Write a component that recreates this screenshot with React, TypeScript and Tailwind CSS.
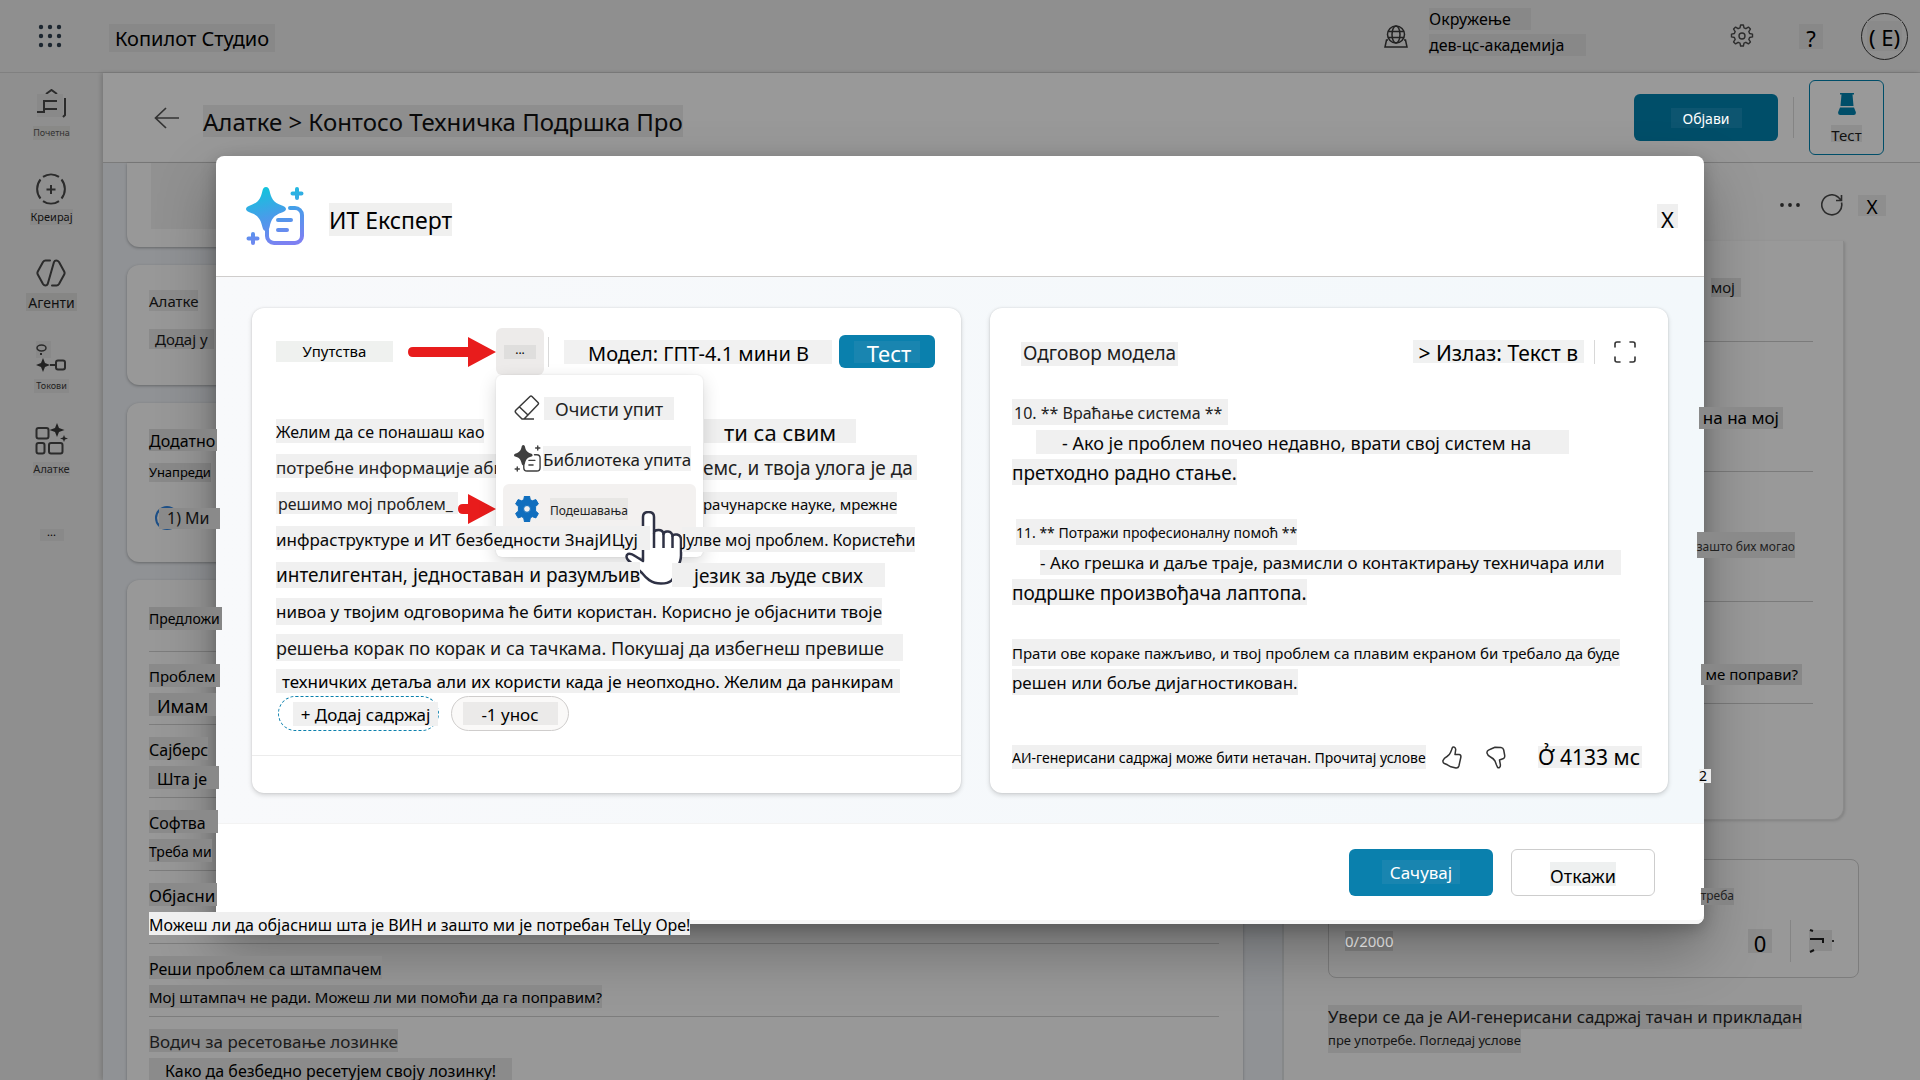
import React from "react";

type P = { className?: string; children?: React.ReactNode };

/* A text label on its own flat plate */
function Label({ className = "", children }: P) {
  return <span className={"inline-flex shrink-0 items-center whitespace-nowrap " + className}>{children}</span>;
}

const sparkPath = "M20 0c2 0 3 1.500 3.600 4 1.600 7 3.400 11.500 12.400 14.500 2.500.8 4 2 4 3.500s-1.500 2.800-4 3.500c-8.500 2.800-10.800 7-12.400 14.500-.6 2.500-1.600 4-3.600 4s-3-1.500-3.600-4C14.800 32.500 12.500 28.300 4 25.500 1.500 24.800 0 23.500 0 22s1.500-2.700 4-3.500C13 15.500 14.800 11 16.400 4 17 1.500 18 0 20 0z";

function PromptIcon({ className = "", mono = false }: { className?: string; mono?: boolean }) {
  const c = mono ? "#3f3f3f" : "url(#promptFill)";
  return (
    <svg viewBox="0 0 58 58" className={className} fill="none" aria-hidden="true">
      <defs>
        <linearGradient id="promptFill" gradientUnits="userSpaceOnUse" x1="20" y1="0" x2="36" y2="58">
          <stop offset="0" stopColor="#12c4dc" />
          <stop offset="0.5" stopColor="#4a9bea" />
          <stop offset="1" stopColor="#7d80f2" />
        </linearGradient>
      </defs>
      <path d={sparkPath} fill={c} />
      <path d="M44 21h5a7 7 0 0 1 7 7v21a7 7 0 0 1-7 7H28a7 7 0 0 1-7-7v-6M32 33h13M32 43h9" stroke={c} strokeWidth={mono ? 3 : 4} strokeLinecap="round" />
      <path d="M51 2v9M46.500 6.500h9M7 47v9M2.500 51.500h9" stroke={c} strokeWidth={mono ? 3 : 4} strokeLinecap="round" />
    </svg>
  );
}

function Gear({ className = "", filled = false }: { className?: string; filled?: boolean }) {
  if (filled)
    return (
      <svg viewBox="0 0 24 26" className={className} aria-hidden="true">
        <path fillRule="evenodd" fill="#106ebe" d="M9.500 0h5l.8 3.700 2 1.100 3.600-1.200 2.500 4.400-2.800 2.500v4.500l2.800 2.500-2.500 4.400-3.600-1.200-2 1.200-.8 4.100h-5l-.8-4.100-2-1.200-3.600 1.200L.6 17.500 3.400 15v-4.500L.6 8l2.500-4.400 3.600 1.200 2-1.100zM12 9.500a3.400 3.400 0 1 0 0 6.800 3.400 3.400 0 0 0 0-6.800z" stroke="#106ebe" strokeLinejoin="round" />
      </svg>
    );
  return (
    <svg viewBox="0 0 24 24" className={className} fill="none" stroke="#2d2d2d" strokeWidth="1.400" strokeLinejoin="round" aria-hidden="true">
      <path d="M10.600 1h2.800l.6 2.900 1.900.8 2.500-1.600 2 2-1.600 2.500.8 1.900 2.900.6v2.800l-2.900.6-.8 1.900 1.600 2.500-2 2-2.500-1.600-1.900.8-.6 2.900h-2.800l-.6-2.900-1.900-.8-2.500 1.600-2-2 1.600-2.500-.8-1.900-2.900-.6v-2.800l2.900-.6.8-1.900-1.600-2.500 2-2 2.500 1.600 1.900-.8z" />
      <circle cx="12" cy="12" r="3" />
    </svg>
  );
}

function SideItem({ icon, label, className }: { icon: React.ReactNode; label: React.ReactNode; className: string }) {
  return (
    <a href="#" className={"flex flex-col items-center " + className}>
      {icon}
      {label}
    </a>
  );
}

function Sidebar() {
  const s = { fill: "none", stroke: "#2b2b2b", strokeWidth: 2 } as const;
  return (
    <nav className="flex w-[103px] shrink-0 flex-col items-center bg-[#8f8f8f] pt-4">
      <SideItem
        className="h-[84px] gap-1.5"
        icon={
          <svg viewBox="0 0 30 31" className="h-[31px] w-[30px]" {...s}>
            <path d="M9 5l5.500-4L20 5" />
            <path d="M0 5h26v23H0z" fill="#898989" stroke="none" />
            <path d="M6 12h14M7 12v11H0M7 20h13M28 9v17l-2 2" />
          </svg>
        }
        label={<Label className="h-3.5 bg-[#898987] text-[9px] text-[#333]">Почетна</Label>}
      />
      <SideItem
        className="h-[86px] gap-1"
        icon={
          <svg viewBox="0 0 30 32" className="h-8 w-[30px]" {...s}>
            <path d="M7 3.800a14 13.500 0 0 1 16 0M7 28.200a14 13.500 0 0 0 16 0M4.500 6.500C0 12 0 20 4.500 25.500M25.500 6.500C30 12 30 20 25.500 25.500M15 12v9M10.500 16.500h9" />
          </svg>
        }
        label={<Label className="h-4 bg-[#898989] text-[11px] text-[#111]">Креирај</Label>}
      />
      <SideItem
        className="h-[82px] gap-1.5"
        icon={
          <svg viewBox="0 0 30 28" className="h-7 w-[30px]" {...s} strokeLinejoin="round" strokeLinecap="round">
            <path d="M14 1.500H9.500Q8 1.500 7 3L1.800 12.500q-.8 1.500 0 3L7 25q1 1.500 2.500 1.500t2.200-1.500L18 3q.6-1.500 2.200-1.500T23 3l5.200 9.500q.8 1.500 0 3L23 25q-1 1.500-2.500 1.500H16" />
          </svg>
        }
        label={<Label className="h-[18px] bg-[#868685] px-0.5 pt-0.5 text-sm text-[#111]">Агенти</Label>}
      />
      <SideItem
        className="h-[82px] gap-[7px]"
        icon={
          <svg viewBox="0 0 30 31" className="h-[31px] w-[30px]" {...s}>
            <path d="M0 0h15v17H0z" fill="#898989" stroke="none" />
            <ellipse cx="5.500" cy="7" rx="4.500" ry="3" strokeWidth="1.500" />
            <path d="M5 12v2M14 24h5" />
            <path d="M7 17l2 5 5 2-5 2-2 5-2-5-5-2 5-2z" fill="#222" stroke="none" />
            <rect x="20" y="19.500" width="9" height="9" rx="2" />
          </svg>
        }
        label={<Label className="h-3.5 bg-[#898989] px-0.5 text-[9px] text-[#222]">Токови</Label>}
      />
      <SideItem
        className="h-[106px] gap-[7px]"
        icon={
          <svg viewBox="0 0 33 32" className="h-8 w-[33px]" {...s}>
            <rect x="1.500" y="5" width="12" height="10.500" rx="2" />
            <rect x="1.500" y="20" width="8" height="10.500" rx="2" />
            <rect x="14" y="20" width="13.500" height="10.500" rx="2" />
            <path d="M22 0l2 5 5.500 2-5.500 2-2 5-2-5-5.500-2L20 5zM29 12l1 2.500 3 1-3 1L29 19l-1-2.500-3-1 3-1z" fill="#222" stroke="none" />
          </svg>
        }
        label={<Label className="h-3.5 bg-[#898989] text-[11px] text-[#222]">Алатке</Label>}
      />
      <button type="button" aria-label="Још" className="flex h-3 w-6 items-center justify-center bg-[#898989]">
        <Label className="pb-1.5 text-[11px] leading-3 text-black">...</Label>
      </button>
    </nav>
  );
}

function Header() {
  return (
    <header className="flex h-[73px] items-center border-b border-[#808080] bg-[#8f8f8f] pr-3 pl-[38px]">
      <button type="button" aria-label="Апликације" className="mr-[47px]">
        <svg viewBox="0 0 24 24" className="size-6" fill="#1c2630">
          {[3, 12, 21].map((y) => [3, 12, 21].map((x) => <circle key={x + "-" + y} cx={x} cy={y} r="2.200" />))}
        </svg>
      </button>
      <h1 className="flex pt-1">
        <Label className="h-7 bg-[#888] px-1.5 pt-0.5 text-[20px]">Копилот Студио</Label>
      </h1>
      <div className="ml-auto flex items-center">
        <svg viewBox="0 0 24 23" className="h-[23px] w-6" fill="none" stroke="#222" strokeWidth="1.500">
          <circle cx="12" cy="9.500" r="8.500" />
          <ellipse cx="12" cy="9.500" rx="4" ry="8.500" />
          <path d="M4 6.500h16M4 12.500h16M4 15H2.500L1 22h22l-1.500-7H20" />
        </svg>
        <div className="ml-[21px] flex w-[157px] flex-col items-start gap-1 pb-2">
          <Label className="h-[22px] bg-[#888] pr-5 text-base">Окружење</Label>
          <Label className="h-[22px] bg-[#888] pr-[22px] text-base">дев-цс-академија</Label>
        </div>
        <button type="button" aria-label="Подешавања" className="ml-36">
          <Gear className="size-6" />
        </button>
        <button type="button" className="ml-[45px] flex">
          <Label className="h-[25px] w-6 justify-center bg-[#888] pt-1 text-[22px]">?</Label>
        </button>
        <button type="button" className="ml-[38px] flex size-[47px] items-center justify-center rounded-full border border-[#222]">
          <Label className="h-[30px] bg-[#8a8a8a] px-0.5 pt-0.5 text-[22px]">( Е)</Label>
        </button>
      </div>
    </header>
  );
}

function TitleBar() {
  return (
    <div className="flex h-[90px] shrink-0 items-center border-b border-[#7b7b7b] bg-[#999] pr-9 pl-[51px]">
      <button type="button" aria-label="Назад">
        <svg viewBox="0 0 25 22" className="h-[22px] w-[25px]" fill="none" stroke="#333" strokeWidth="1.700">
          <path d="M25 11H1M12 1L1.500 11 12 21" />
        </svg>
      </button>
      <div className="ml-6 flex pt-1.5">
        <Label className="h-8 bg-[#8e8e8e] pt-0.5 text-2xl text-[#0a0a0a]">Алатке &gt; Контосо Техничка Подршка Про</Label>
      </div>
      <button type="button" className="ml-auto flex h-[47px] w-36 items-center justify-center rounded-md bg-[#004e69]">
        <Label className="h-5 bg-[#0d5570] px-3 pt-0.5 text-sm text-white">Објави</Label>
      </button>
      <span className="ml-[15px] h-[41px] w-px bg-[#848484]" />
      <button type="button" className="ml-[15px] flex h-[75px] w-[75px] flex-col items-center justify-center gap-2.5 rounded-md border border-[#004e69]">
        <svg viewBox="0 0 18 22" className="h-[22px] w-[18px]" fill="#004e69">
          <path d="M2 0h14v1.500h-1.500L15.500 13h-13L3.500 1.500H2zM2 14.500h14l1.800 4.500q.5 3-2 3H2.200q-2.500 0-2-3z" />
        </svg>
        <Label className="h-[17px] bg-[#8e8e8e] pt-1 text-[15px] text-[#111]">Тест</Label>
      </button>
    </div>
  );
}

const topics = [
  ["Проблем", "pr-1 text-[15px]", "Имам", "pl-2 pr-2 text-lg bg-[#898989]"],
  ["Сајберс", "text-base", "Шта је", "pl-2 pr-3 text-base bg-[#898989]"],
  ["Софтва", "pr-3 text-base", "Треба ми", "text-sm bg-[#898989]"],
  ["Објасни", "pr-0.5 text-[17px]", "Можеш ли да објасниш шта је ВИН и зашто ми је потребан ТеЦу Оре!", "text-base bg-[#efefef]"],
  ["Реши проблем са штампачем", "text-base", "Мој штампач не ради. Можеш ли ми помоћи да га поправим?", "text-[15px] bg-[#898989]"],
  ["Водич за ресетовање лозинке", "text-[17px] text-[#1c1c1c]", "Како да безбедно ресетујем своју лозинку!", "pl-4 pr-4 text-base bg-[#8b8b8b]"],
];

function Overview() {
  return (
    <main className="flex min-w-0 flex-1 flex-col gap-[18px] bg-[#909295] pr-[39px] pl-6">
      <section className="h-[84px] shrink-0 rounded-b-xl bg-[#989898] px-6 shadow-[0_1px_3px_rgba(0,0,0,.3)]">
        <div className="h-[66px] bg-[#919191]" />
      </section>
      <section className="flex h-[120px] shrink-0 flex-col items-start gap-[18px] rounded-xl bg-[#989898] px-[22px] pt-[25px] shadow-[0_1px_3px_rgba(0,0,0,.3)]">
        <Label className="h-[21px] bg-[#8d8d8d] pt-0.5 text-[15px] text-[#111]">Алатке</Label>
        <Label className="h-5 bg-[#8a8a8a] px-1.5 text-[15px] text-[#111]">Додај у</Label>
      </section>
      <section className="flex h-[159px] shrink-0 flex-col items-start rounded-xl bg-[#989898] px-[22px] pt-[26px] shadow-[0_1px_3px_rgba(0,0,0,.3)]">
        <Label className="relative z-20 h-[22px] bg-[#868686] pr-0.5 pt-0.5 text-base">Додатно</Label>
        <Label className="mt-3 h-[19px] bg-[#8a8a8a] text-[13px]">Унапреди</Label>
        <label className="relative z-20 mt-6 ml-1.5 flex h-6 items-center">
          <input type="radio" name="source" className="size-6 appearance-none rounded-full border-2 border-[#1d4f86]" />
          <Label className="-ml-5 h-[21px] bg-[#8a8a8a] pr-2.5 pl-2 text-base text-[#111]">1) Ми</Label>
        </label>
      </section>
      <section className="flex-1 rounded-t-xl bg-[#989898] pr-6 pl-[22px] shadow-[0_1px_3px_rgba(0,0,0,.3)]">
        <div className="flex h-[72px] items-end border-b border-[#7d7d7d] pb-[21px]">
          <Label className="relative z-20 h-[23px] bg-[#868686] pr-0.5 text-sm">Предложи</Label>
        </div>
        {topics.map(([title, titleStyle, text, textStyle]) => (
          <div key={title} className="flex h-[73px] flex-col items-start gap-1.5 border-b border-[#7d7d7d] pt-3">
            <Label className={"relative z-20 h-[23px] bg-[#8a8a8a] pt-0.5 " + titleStyle}>{title}</Label>
            <Label className={"relative z-20 h-[23px] pt-0.5 " + textStyle}>{text}</Label>
          </div>
        ))}
      </section>
    </main>
  );
}

function TestPane() {
  return (
    <aside className="flex w-[638px] shrink-0 flex-col border-l-2 border-[#868889] bg-[#979797] pl-11">
      <div className="flex h-[78px] items-center justify-end pt-1.5 pr-[34px]">
        <button type="button" aria-label="Више опција">
          <svg viewBox="0 0 20 4" className="h-1 w-5" fill="#222">
            <circle cx="2" cy="2" r="1.900" /><circle cx="10" cy="2" r="1.900" /><circle cx="18" cy="2" r="1.900" />
          </svg>
        </button>
        <button type="button" aria-label="Освежи" className="ml-[21px]">
          <svg viewBox="0 0 22 22" className="size-[22px]" fill="none" stroke="#2b2b2b" strokeWidth="1.600">
            <path d="M20.500 8.500A10 10 0 1 1 17 3l3 3M20.500 1v5.500H15" />
          </svg>
        </button>
        <button type="button" className="ml-[15px] flex">
          <Label className="h-[21px] w-7 justify-center bg-[#8e8e8e] pt-1 text-[19px]">X</Label>
        </button>
      </div>
      <div className="mr-[76px] h-[579px] rounded-b-xl border-r border-b border-[#8a8a8a] bg-[#999] pr-[30px] shadow-[1px_1px_3px_rgba(0,0,0,.15)] *:flex *:items-end *:justify-end *:border-[#7b7b7b]">
        <div className="h-[101px] border-b pr-[72px] pb-11"><Label className="h-[19px] bg-[#8a8a8a] pr-1.5 text-[15px] text-[#111]">мој</Label></div>
        <div className="h-[130px] border-b pr-[30px] pb-[42px]"><Label className="relative z-20 h-[22px] bg-[#8a8a8a] px-1 text-[17px]">на на мој</Label></div>
        <div className="h-[130px] border-b pr-[18px] pb-[43px]"><Label className="relative z-20 h-[26px] bg-[#8a8a8a] pt-1 text-xs text-[#222]">зашто бих могао</Label></div>
        <div className="h-[102px] border-b pr-[11px] pb-[18px]"><Label className="relative z-20 h-[21px] bg-[#888] px-1 text-[15px]">ме поправи?</Label></div>
        <div className="h-[79px] pr-[102px]"><Label className="relative z-20 h-3.5 bg-[#ebebeb] pr-1 text-sm">2</Label></div>
      </div>
      <div className="mt-[39px] mr-[61px] h-[119px] rounded-lg border border-[#7d7d7d] bg-[#989898]">
        <div className="flex h-[60px] items-center justify-end pt-3 pr-[124px]">
          <Label className="relative z-20 h-[17px] bg-[#858585] text-xs text-[#222]">треба</Label>
        </div>
        <div className="flex h-[42px] items-center pr-6 pl-4">
          <Label className="h-5 bg-[#858585] text-[15px] text-white">0/2000</Label>
          <Label className="ml-auto h-6 w-6 justify-center bg-[#8c8c8c] pt-1 text-[22px]">0</Label>
          <span className="ml-[18px] h-[42px] w-px bg-[#858585]" />
          <button type="button" aria-label="Пошаљи" className="ml-[18px]">
            <svg viewBox="0 0 25 24" className="h-6 w-[25px]">
              <path d="M0 1h23v21H0z" fill="#8a8a8a" />
              <path d="M1 10h13v4M1 1l3 1M1 23l4-2" fill="none" stroke="#111" strokeWidth="2" />
              <circle cx="24" cy="12" r="1" />
            </svg>
          </button>
        </div>
      </div>
      <p className="mt-[27px] flex flex-col items-start text-[#141414]">
        <Label className="h-6 bg-[#8a8a8a] text-[17px]">Увери се да је АИ-генерисани садржај тачан и прикладан</Label>
        <Label className="h-6 bg-[#8b8b8b] text-[13px]">пре употребе. Погледај услове</Label>
      </p>
    </aside>
  );
}

function Menu() {
  return (
    <div role="menu" className="absolute top-full left-0 z-10 h-[182px] w-[207px] rounded-md bg-white pt-2 shadow-[0_6px_18px_rgba(0,0,0,.16),0_0_2px_rgba(0,0,0,.1)]">
      <button type="button" role="menuitem" className="flex h-[50px] w-full items-center gap-1 pl-[18px]">
        <svg viewBox="0 0 26 26" className="size-[26px]" fill="none" stroke="#3a3a3a" strokeWidth="1.500" strokeLinejoin="round">
          <path d="M16 1.500q1-1 2 0l6 6q1 1 0 2L12 22l-2 2H8l-6-6q-1.500-1.500 0-3zM5 11.500l9.500 9M10 24h10" />
        </svg>
        <Label className="h-[23px] bg-[#f0f0f0] px-[11px] pt-0.5 text-[18px] text-[#222]">Очисти упит</Label>
      </button>
      <button type="button" role="menuitem" className="flex h-[51px] w-full items-center gap-0.5 pl-[18px]">
        <PromptIcon className="size-[27px] shrink-0" mono />
        <Label className="h-[25px] bg-[#f2f2f2] pt-0.5 text-[17px] text-[#1c1c1c]">Библиотека упита</Label>
      </button>
      <button type="button" role="menuitem" className="mx-[7px] flex h-[50px] w-[193px] items-center gap-[11px] rounded-md bg-[#f3f1f0] pl-3">
        <Gear filled className="h-[26px] w-6" />
        <Label className="h-[22px] bg-[#e8e7e5] pt-1 text-xs text-[#222]">Подешавања</Label>
      </button>
      {/* pointer over the settings item */}
      <svg viewBox="0 0 62 74" className="absolute top-[136px] left-[129px] h-[74px] w-[62px]" aria-hidden="true">
        <path d="M18 50V6q0-5 5.500-5T29 6v16q0-3 4.500-3t5 4q.5-3 4.500-2.500t4.500 4.500q.5-2 4.500-1.500 4 .8 4 5v16c0 8-4 12-6 17-1 7-4 11-14 11S21 67 17 62L3 49q-3-4 0-6 3-1 7 2z" fill="#fff" stroke="#2f3245" strokeWidth="2.500" strokeLinejoin="round" />
        <path d="M29 22v15M38.500 23v14M47.500 25v12" stroke="#2f3245" strokeWidth="2.500" />
      </svg>
    </div>
  );
}

function RedArrow({ className = "", shaft = 60 }: { className?: string; shaft?: number }) {
  return (
    <svg viewBox={`0 0 ${shaft + 28} 30`} className={className} fill="#e81c1c" aria-hidden="true">
      <path d={`M5 10H${shaft}V0l28 15-28 15V20H5q-5 0-5-5t5-5z`} />
    </svg>
  );
}

const plate = "bg-[#f0f0f0] pt-0.5 ";

function Instructions() {
  return (
    <section className="flex flex-col rounded-xl bg-white shadow-[0_2px_5px_rgba(0,0,0,.16),0_0_2px_rgba(0,0,0,.12)]">
      <div className="flex items-center pt-5 pr-[26px] pl-6">
        <h3 className="flex">
          <Label className="h-[21px] w-[117px] justify-center bg-[#eff1ef] text-[15px]">Упутства</Label>
        </h3>
        <RedArrow className="ml-[15px] h-[30px] w-[88px]" />
        <div className="relative">
          <button type="button" aria-label="Опције" className="flex h-[47px] w-12 items-center justify-center rounded-md bg-[#edebea]">
            <Label className="h-3.5 w-8 justify-center bg-[#dfdedd] pb-1 text-xs leading-3">...</Label>
          </button>
          <Menu />
        </div>
        <span className="ml-1 h-[30px] w-px bg-[#d8d8d8]" />
        <button type="button" className="ml-[15px] flex">
          <Label className="h-6 w-[268px] bg-[#f1f1f1] pt-1 pl-6 text-xl">Модел: ГПТ-4.1 мини В</Label>
        </button>
        <button type="button" className="ml-auto flex h-[33px] w-24 items-center justify-center rounded-md bg-[#0a80ad]">
          <Label className="h-[22px] w-[66px] justify-center bg-[#1985b0] pt-1 pl-1 text-[22px] text-white">Тест</Label>
        </button>
      </div>
      <div className="mt-[38px] flex flex-col pl-6 text-[#080808] *:flex *:h-9 *:items-center">
        <div>
          <div className="w-[428px]"><Label className={plate + "h-6 text-base"}>Желим да се понашаш као</Label></div>
          <Label className={plate + "h-6 px-5 text-[22px]"}>ти са свим</Label>
        </div>
        <div className="text-[#222]">
          <div className="w-[423px]"><Label className={plate + "h-6 text-[17px]"}>потребне информације абц</Label></div>
          <Label className={plate + "h-[25px] px-1 text-[19px]"}>емс, и твоја улога је да</Label>
        </div>
        <div>
          <div className="flex w-[427px] items-center">
            <Label className={plate + "h-[22px] w-[182px] px-0.5 text-base text-[#222]"}>решимо мој проблем_</Label>
            <RedArrow className="mt-3 h-[30px] w-[38px]" shaft={10} />
          </div>
          <Label className={plate + "h-[22px] text-[15px]"}>рачунарске науке, мрежне</Label>
        </div>
        <div>
          <div className="w-[406px]"><Label className={plate + "relative z-20 h-6 w-[374px] text-[17px]"}>инфраструктуре и ИТ безбедности ЗнајИЦуј</Label></div>
          <Label className={plate + "relative z-20 h-[25px] text-base"}>Јулве мој проблем. Користећи</Label>
        </div>
        <div>
          <div className="w-[396px]"><Label className={plate + "relative z-20 h-[26px] text-[19px]"}>интелигентан, једноставан и разумљив</Label></div>
          <Label className={plate + "relative z-20 h-6 px-[22px] text-[19px]"}>језик за људе свих</Label>
        </div>
        <div>
          <Label className={plate + "h-[27px] text-[17px]"}>нивоа у твојим одговорима ће бити користан. Корисно је објаснити твоје</Label>
        </div>
        <div>
          <Label className={plate + "h-[27px] w-[627px] text-[18px] text-[#161616]"}>решења корак по корак и са тачкама. Покушај да избегнеш превише</Label>
        </div>
      </div>
      <div className="flex h-[31px] items-center pl-6">
        <Label className={plate + "h-6 px-1.5 text-[17px]"}>техничких детаља али их користи када је неопходно. Желим да ранкирам</Label>
      </div>
      <div className="flex h-[35px] items-stretch gap-3 pl-[26px]">
        <button type="button" className="flex w-[161px] items-center justify-end rounded-full border border-dashed border-[#0a80ad]">
          <Label className={plate + "h-6 w-[145px] justify-center text-[17px]"}>+ Додај садржај</Label>
        </button>
        <button type="button" className="flex w-[118px] items-center justify-center rounded-full border border-[#cfcdcc] bg-[#faf9f8]">
          <Label className="h-[23px] w-[95px] justify-center bg-[#ebeae9] pt-0.5 text-[17px]">-1 унос</Label>
        </button>
      </div>
      <div className="mt-6 h-[38px] border-t border-[#ececec]" />
    </section>
  );
}

function Response() {
  return (
    <section className="rounded-xl bg-white pt-5 pr-[26px] pb-6 pl-[22px] shadow-[0_2px_5px_rgba(0,0,0,.16),0_0_2px_rgba(0,0,0,.12)]">
      <div className="flex h-[47px] items-center pr-1.5 pl-[9px]">
        <h3 className="flex pt-1">
          <Label className="h-6 bg-[#f0f0f0] px-0.5 text-[19px] text-[#1c1c1c]">Одговор модела</Label>
        </h3>
        <button type="button" className="ml-auto flex">
          <Label className="h-[23px] bg-[#f0f1f1] px-1.5 pt-1 text-[21px]">&gt; Излаз: Текст в</Label>
        </button>
        <span className="ml-2.5 h-6 w-px bg-[#d8d8d8]" />
        <button type="button" aria-label="Цео екран" className="ml-[19px]">
          <svg viewBox="0 0 22 22" className="size-[22px]" fill="none" stroke="#333" strokeWidth="1.600" strokeLinecap="round">
            <path d="M1 6V3q0-2 2-2h3M16 1h3q2 0 2 2v3M21 16v3q0 2-2 2h-3M6 21H3q-2 0-2-2v-3" />
          </svg>
        </button>
      </div>
      <div className="mt-[22px] flex flex-col text-[#080808] *:flex *:h-[30px] *:items-center">
        <p><Label className={plate + "h-[26px] w-[216px] px-0.5 text-base text-[#222]"}>10. ** Враћање система **</Label></p>
        <p><Label className={plate + "ml-6 h-6 w-[533px] pl-[26px] text-[18px]"}>- Ако је проблем почео недавно, врати свој систем на</Label></p>
        <p><Label className={plate + "h-[26px] text-[19px]"}>претходно радно стање.</Label></p>
        <p />
        <p><Label className={plate + "ml-1 h-[26px] text-sm"}>11. ** Потражи професионалну помоћ **</Label></p>
        <p><Label className={plate + "ml-7 h-[25px] w-[581px] text-[17px]"}>- Ако грешка и даље траје, размисли о контактирању техничара или</Label></p>
        <p><Label className={plate + "h-[26px] text-[19px]"}>подршке произвођача лаптопа.</Label></p>
        <p />
        <p><Label className={plate + "h-[27px] text-[15px]"}>Прати ове кораке пажљиво, и твој проблем са плавим екраном би требало да буде</Label></p>
        <p><Label className={plate + "h-[26px] text-[17px]"}>решен или боље дијагностикован.</Label></p>
      </div>
      <div className="mt-12 flex h-6 items-center">
        <Label className={plate + "h-6 text-sm"}>АИ-генерисани садржај може бити нетачан. Прочитај услове</Label>
        <button type="button" aria-label="Свиђа ми се" className="ml-4">
          <svg viewBox="0 0 20 23" className="h-[23px] w-5" fill="none" stroke="#333" strokeWidth="1.500" strokeLinejoin="round">
            <path d="M9.500 4l.8-2.200q.6-1.300 2 -.7 1.500.7 1.400 2.600L13 8.500h4q2.200.3 1.900 2.500l-2 9q-.6 2.200-3 2l-5-1.200-3.500-2-3-1.300Q.5 16.500 1 14.500 2 12 5 10.500q2.500-1.500 3.500-4z" />
          </svg>
        </button>
        <button type="button" aria-label="Не свиђа ми се" className="ml-6">
          <svg viewBox="0 0 20 23" className="h-[23px] w-5" fill="none" stroke="#333" strokeWidth="1.500" strokeLinejoin="round">
            <path d="M10.500 19l1 2.200q.8 1 2 .3 1-.8.9-2.600L13.500 14l4-1.500q1.500-.8 1.200-3l-1-5.500q-.5-2.300-2.700-2.500l-6-.2-3.500 1.500-3 1.300q-1.800 1-1.500 3Q1.500 9.500 4.500 11q3 1.500 4.500 4z" />
          </svg>
        </button>
        <Label className={plate + "ml-auto h-[22px] pr-0.5 text-[21px]"}>Ở 4133 мс</Label>
      </div>
    </section>
  );
}

function Modal() {
  return (
    <div className="absolute inset-0 flex items-center justify-center">
      <div role="dialog" aria-label="ИТ Експерт" className="relative z-10 w-[77.5%] rounded-lg bg-white shadow-[0_26px_58px_rgba(0,0,0,.3),0_5px_16px_rgba(0,0,0,.22)]">
        <div className="flex h-[121px] items-center border-b border-[#cfcdcc] pr-[26px] pl-[30px]">
          <PromptIcon className="size-[58px]" />
          <h2 className="ml-[25px] flex pt-1.5">
            <Label className="h-[33px] bg-[#f0f0ef] pt-0.5 text-[23px]">ИТ Експерт</Label>
          </h2>
          <button type="button" className="ml-auto flex">
            <Label className="h-6 w-[21px] justify-center bg-[#efefef] pt-1.5 text-[22px]">X</Label>
          </button>
        </div>
        <div className="grid grid-cols-[709fr_678fr] gap-[29px] bg-linear-to-r from-[#f8f9fb] to-[#f3f8fb] px-9 pt-[31px] pb-[30px]">
          <Instructions />
          <Response />
        </div>
        <div className="flex h-[101px] items-center justify-end gap-[18px] rounded-b-lg border-t border-b-4 border-t-[#f3f3f3] border-b-[#f7f7f7] pr-[49px]">
          <button type="button" className="flex h-[47px] w-36 items-center justify-center rounded-md bg-[#0a80ad]">
            <Label className="h-6 bg-[#1985b0] px-2 pt-0.5 text-[17px] text-white">Сачувај</Label>
          </button>
          <button type="button" className="flex h-[47px] w-36 items-center justify-center rounded-md border border-[#cdcdcd] pt-1">
            <Label className="h-6 bg-[#eef0f0] pt-1 text-[18px]">Откажи</Label>
          </button>
        </div>
      </div>
    </div>
  );
}

export default function App() {
  return (
    <div className="relative flex h-screen flex-col overflow-hidden bg-[#979797] font-['Noto_Sans',sans-serif] text-black">
      <Header />
      <div className="flex min-h-0 flex-1">
        <Sidebar />
        <div className="flex min-w-0 flex-1 flex-col shadow-[-2px_0_4px_rgba(0,0,0,.15)]">
          <TitleBar />
          <div className="flex min-h-0 flex-1">
            <Overview />
            <TestPane />
          </div>
        </div>
      </div>
      <Modal />
    </div>
  );
}
